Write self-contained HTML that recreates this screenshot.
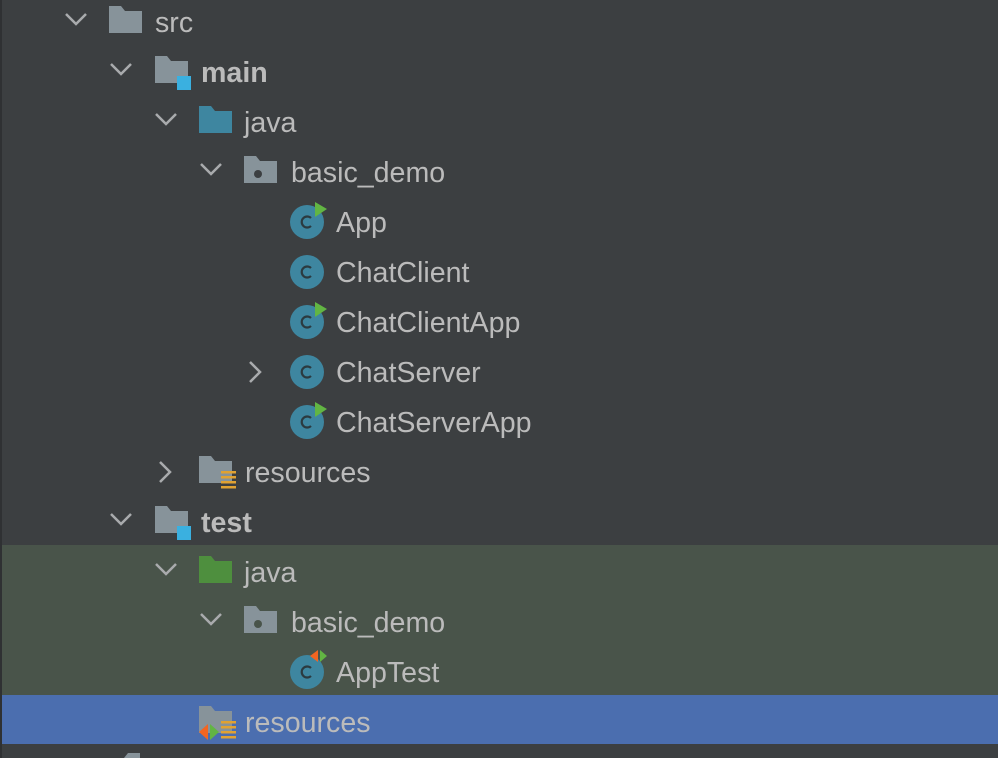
<!DOCTYPE html>
<html><head><style>
body{margin:0;width:998px;height:758px;background:#3c3f41;position:relative;overflow:hidden;font-family:"Liberation Sans",sans-serif;}
.t{position:absolute;font-size:28.6px;color:#bbbbbb;line-height:30px;white-space:nowrap;}
.b{font-weight:bold;}
svg{position:absolute;}
</style></head><body>
<div style="position:absolute;left:0;top:0;width:2px;height:758px;background:#2f3133"></div>
<div style="position:absolute;left:2px;top:545px;width:996px;height:150px;background:#49544a"></div>
<div style="position:absolute;left:2px;top:695px;width:996px;height:49px;background:#4b6eaf"></div>

<svg width="998" height="758" style="left:0;top:0">
<g fill="none" stroke="#a9abad" stroke-width="2.5">
<polyline points="66,14 76,24 86,14"/>
<polyline points="111,64 121,74 131,64"/>
<polyline points="156,114 166,124 176,114"/>
<polyline points="201,164 211,174 221,164"/>
<polyline points="111,514 121,524 131,514"/>
<polyline points="156,564 166,574 176,564"/>
<polyline points="201,614 211,624 221,614"/>
<polyline points="250,362 260,372 250,382"/>
<polyline points="160,462 170,472 160,482"/>
</g>
<path d="M124,758l4,-5h12v5z" fill="#87939a"/>
<path d="M109,6h12l4,5h17v22h-33z" fill="#87939a"/>
<path d="M155,56h12l4,5h17v22h-33z" fill="#87939a"/><rect x="177" y="76" width="14" height="14" fill="#3ab0e0"/>
<path d="M155,506h12l4,5h17v22h-33z" fill="#87939a"/><rect x="177" y="526" width="14" height="14" fill="#3ab0e0"/>
<path d="M199,106h12l4,5h17v22h-33z" fill="#3e86a0"/>
<path d="M199,556h12l4,5h17v22h-33z" fill="#4e8f3e"/>
<path d="M244,156h12l4,5h17v22h-33z" fill="#87939a"/><circle cx="258" cy="174" r="4" fill="#3c3f41"/>
<path d="M244,606h12l4,5h17v22h-33z" fill="#87939a"/><circle cx="258" cy="624" r="4" fill="#49544a"/>
<path d="M199,456h12l4,5h17v22h-33z" fill="#87939a"/>
<g fill="#e0a232"><rect x="221" y="471" width="15" height="2.5"/><rect x="221" y="476" width="15" height="2.5"/><rect x="221" y="481" width="15" height="2.5"/><rect x="221" y="486" width="15" height="2.5"/></g>
<path d="M199,706h12l4,5h17v22h-33z" fill="#87939a"/>
<g fill="#e0a232"><rect x="221" y="721" width="15" height="2.5"/><rect x="221" y="726" width="15" height="2.5"/><rect x="221" y="731" width="15" height="2.5"/><rect x="221" y="736" width="15" height="2.5"/></g>
<polygon points="208,724 199,732 208,740" fill="#f26522"/><polygon points="210,724 219,732 210,740" fill="#62b543"/>
<g fill="#3e86a0">
<circle cx="307" cy="222" r="17"/><circle cx="307" cy="272" r="17"/><circle cx="307" cy="322" r="17"/><circle cx="307" cy="372" r="17"/><circle cx="307" cy="422" r="17"/><circle cx="307" cy="672" r="17"/>
</g>
<g fill="none" stroke="#2b3a40" stroke-width="2.2">
<path d="M311,218a5.5,5.5 0 1 0 0,8"/><path d="M311,268a5.5,5.5 0 1 0 0,8"/><path d="M311,318a5.5,5.5 0 1 0 0,8"/><path d="M311,368a5.5,5.5 0 1 0 0,8"/><path d="M311,418a5.5,5.5 0 1 0 0,8"/><path d="M311,668a5.5,5.5 0 1 0 0,8"/>
</g>
<g fill="#62b543"><polygon points="315,202 327,209 315,217"/><polygon points="315,302 327,309 315,317"/><polygon points="315,402 327,409 315,417"/></g>
<polygon points="318,650 310,656 318,662" fill="#f26522"/><polygon points="320,650 327,656 320,662" fill="#62b543"/>
</svg>

<div class="t" style="left:155px;top:8px">src</div>
<div class="t b" style="left:201px;top:58px">main</div>
<div class="t" style="left:244px;top:108px">java</div>
<div class="t" style="left:291px;top:158px">basic_demo</div>
<div class="t" style="left:336px;top:208px">App</div>
<div class="t" style="left:336px;top:258px">ChatClient</div>
<div class="t" style="left:336px;top:308px">ChatClientApp</div>
<div class="t" style="left:336px;top:358px">ChatServer</div>
<div class="t" style="left:336px;top:408px">ChatServerApp</div>
<div class="t" style="left:245px;top:458px">resources</div>
<div class="t b" style="left:201px;top:508px">test</div>
<div class="t" style="left:244px;top:558px">java</div>
<div class="t" style="left:291px;top:608px">basic_demo</div>
<div class="t" style="left:336px;top:658px">AppTest</div>
<div class="t" style="left:245px;top:708px">resources</div>
</body></html>
